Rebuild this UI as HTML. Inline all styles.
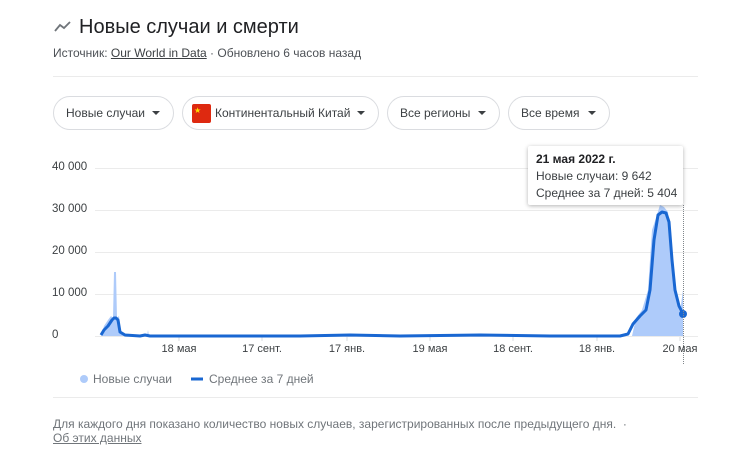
<!DOCTYPE html>
<html><head><meta charset="utf-8"><style>
body{margin:0;width:740px;height:450px;background:#fff;font-family:"Liberation Sans",Arial,sans-serif;color:#202124;position:relative;overflow:hidden}
.a{position:absolute;white-space:nowrap}
.chip{position:absolute;top:96px;height:34px;border:1px solid #dadce0;border-radius:18px;box-sizing:border-box;font-size:12px;color:#3c4043;line-height:32px;padding-left:12px}
.chip .tri{position:absolute;right:13px;top:14px;width:0;height:0;border-left:4px solid transparent;border-right:4px solid transparent;border-top:4px solid #3c4043}
.yl{position:absolute;left:52px;font-size:11.5px;color:#3c4043}
.xl{position:absolute;top:343px;font-size:11px;color:#3c4043;transform:translateX(-50%)}
</style></head><body>
<svg class="a" style="left:53px;top:20px" width="20" height="14" viewBox="0 0 20 14"><path d="M2 11 L7 5 L11 8 L17 2" fill="none" stroke="#70757a" stroke-width="1.8"/></svg>
<div class="a" style="left:79px;top:16px;font-size:20px;color:#202124">Новые случаи и смерти</div>
<div class="a" style="left:53px;top:46px;font-size:12px;color:#4d5156">Источник: <span style="text-decoration:underline;color:#3c4043">Our World in Data</span> · Обновлено 6 часов назад</div>
<div class="a" style="left:53px;top:76px;width:645px;height:1px;background:#ebebeb"></div>
<div class="chip" style="left:53px;width:121px">Новые случаи<span class="tri"></span></div>
<div class="chip" style="left:182px;width:197px;padding-left:32px"><svg style="position:absolute;left:9px;top:7px" width="19" height="19"><rect width="19" height="19" rx="2" fill="#de2910"/><text x="2" y="9" font-size="8" fill="#ffde00">★</text></svg>Континентальный Китай<span class="tri"></span></div>
<div class="chip" style="left:387px;width:113px">Все регионы<span class="tri"></span></div>
<div class="chip" style="left:508px;width:102px">Все время<span class="tri"></span></div>
<div class="yl" style="top:161px">40 000</div>
<div class="yl" style="top:203px">30 000</div>
<div class="yl" style="top:245px">20 000</div>
<div class="yl" style="top:287px">10 000</div>
<div class="yl" style="top:329px">0</div>
<svg class="a" style="left:0;top:0" width="740" height="450">
<g stroke="#ebebeb" stroke-width="1"><line x1="95" y1="168.5" x2="698" y2="168.5"/><line x1="95" y1="210.5" x2="698" y2="210.5"/><line x1="95" y1="252.5" x2="698" y2="252.5"/><line x1="95" y1="294.5" x2="698" y2="294.5"/><line x1="95" y1="336.5" x2="698" y2="336.5"/></g>
<g stroke="#dadce0"><line x1="179" y1="337" x2="179" y2="341"/><line x1="262" y1="337" x2="262" y2="341"/><line x1="347" y1="337" x2="347" y2="341"/><line x1="430" y1="337" x2="430" y2="341"/><line x1="513" y1="337" x2="513" y2="341"/><line x1="597" y1="337" x2="597" y2="341"/><line x1="680" y1="337" x2="680" y2="341"/></g>
<path d="M101 336 L104 326 L108 320 L111 316 L113 318 L114 272 L116 272 L117 318 L119 316 L121 334 L130 336 L147 336 L148 330 L149 336 L632 336 L636 318 L642 310 L648 290 L652 230 L656 218 L660 205 L664 207 L668 212 L672 260 L676 300 L680 312 L683 290 L683 336 Z" fill="#aecbfa"/>
<path d="M101 335 L104 330 L108 326 L112 320 L114 318 L116 318 L118 320 L120 332 L125 335 L140 336 L145 335 L150 336 L300 336 L350 335 L400 336 L480 335 L550 336 L620 336 L628 334 L633 324 L640 316 L646 310 L650 290 L654 240 L658 215 L662 212 L666 213 L669 222 L672 260 L675 290 L679 306 L683 314" fill="none" stroke="#1967d2" stroke-width="3" stroke-linejoin="round"/>
<circle cx="683" cy="314" r="4" fill="#1967d2"/>
<line x1="683.5" y1="205" x2="683.5" y2="365" stroke="#80868b" stroke-dasharray="1,1"/>
<circle cx="84" cy="379" r="4" fill="#aecbfa"/>
<line x1="191" y1="379" x2="203" y2="379" stroke="#1967d2" stroke-width="3"/>
</svg>
<div class="xl" style="left:179px">18 мая</div>
<div class="xl" style="left:262px">17 сент.</div>
<div class="xl" style="left:347px">17 янв.</div>
<div class="xl" style="left:430px">19 мая</div>
<div class="xl" style="left:513px">18 сент.</div>
<div class="xl" style="left:597px">18 янв.</div>
<div class="xl" style="left:680px">20 мая</div>
<div class="a" style="left:93px;top:372px;font-size:12px;color:#70757a">Новые случаи</div>
<div class="a" style="left:209px;top:372px;font-size:12px;color:#70757a">Среднее за 7 дней</div>
<div class="a" style="left:528px;top:146px;width:155px;height:59px;background:#fff;box-shadow:0 1px 4px rgba(0,0,0,.3);border-radius:2px;font-size:12px;color:#3c4043;line-height:17px;padding:5px 8px;box-sizing:border-box">
<b style="color:#202124">21 мая 2022 г.</b><br>Новые случаи: 9 642<br>Среднее за 7 дней: 5 404</div>
<div class="a" style="left:53px;top:397px;width:645px;height:1px;background:#ebebeb"></div>
<div class="a" style="left:53px;top:417px;font-size:12px;color:#70757a">Для каждого дня показано количество новых случаев, зарегистрированных после предыдущего дня. &nbsp;·</div>
<div class="a" style="left:53px;top:431px;font-size:12px;color:#70757a;text-decoration:underline">Об этих данных</div>
</body></html>
